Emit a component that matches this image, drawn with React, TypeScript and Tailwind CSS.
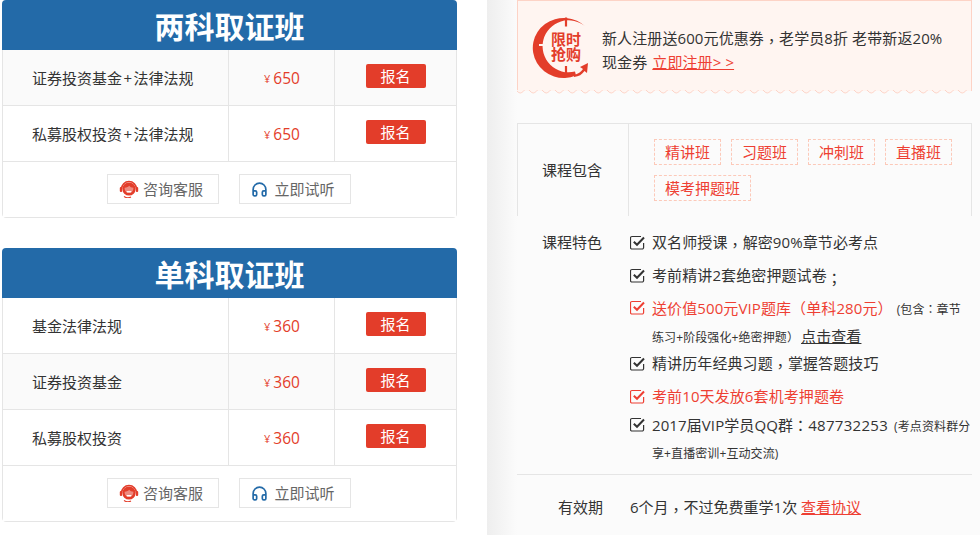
import React from "react";
import { Headphones } from "lucide-react";

const FONT = "font-['Open_Sans','Noto_Sans_CJK_SC',sans-serif]";

const P = ({ c }: { c: string }) => <span className="font-['Noto_Sans_CJK_TC']">{c}</span>;
const Comma = ({ c = "，" }: { c?: string }) => (
  <span className="inline-block translate-y-[3px] font-['Noto_Sans_CJK_TC'] leading-none">{c}</span>
);

function Agent() {
  return (
    <svg width="20" height="18" viewBox="0 0 20 18" className="shrink-0">
      <path d="M2.500 9a7.500 7.500 0 0 1 15 0" fill="none" stroke="#e33d2a" strokeWidth="1.600" />
      <circle cx="10" cy="9" r="6.600" fill="#e33d2a" />
      <path d="M5.600 7.700c2.400-.2 3.800-1 4.600-2 .9 1.200 2.200 1.900 4.200 2 .2 3-1.800 5-4.400 5s-4.600-2-4.400-5z" fill="#fff" opacity="0.4" />
      <rect x="7.500" y="11" width="5" height="1.600" rx="0.800" fill="#fff" />
      <rect x="0.800" y="7" width="2.400" height="5" rx="1" fill="#e33d2a" />
      <rect x="16.800" y="7" width="2.400" height="5" rx="1" fill="#e33d2a" />
      <path d="M5 16.500a7 7 0 0 0 7 .5" fill="none" stroke="#e33d2a" strokeWidth="1.200" />
    </svg>
  );
}

function Row({ name, price, alt }: { name: string; price: string; alt?: boolean }) {
  const parts = name.split("+");
  return (
    <div className={`flex h-[56px] border-b border-[#e5e5e5] ${alt ? "bg-[#fafafa]" : "bg-white"}`}>
      <div className="flex w-[226px] items-center border-r border-[#e5e5e5] pt-[1px] pl-[29px] text-[15px] text-[#333]">
        {parts[0]}
        {parts[1] && <span className="mx-[1.5px]">+</span>}
        {parts[1]}
      </div>
      <div className="flex w-[106px] items-center justify-center border-r border-[#e5e5e5] pt-[3px] pl-[1px] text-[15.5px] text-[#e33d2a]">
        <span className="mr-[3px] text-[11px]">¥</span>
        {price}
      </div>
      <div className="flex flex-1 justify-center pt-[14px]">
        <div className="flex h-[24px] w-[60px] items-center justify-center rounded-[2px] bg-[#e33d2a] text-[15px] text-white">报名</div>
      </div>
    </div>
  );
}

function Card({ title, rows }: { title: string; rows: { n: string; p: string; alt?: boolean }[] }) {
  return (
    <section className="w-[455px] overflow-hidden rounded-[4px]">
      <h2 className="flex h-[50px] items-center justify-center bg-[#236aa8] pt-[3px] text-[30px] font-bold text-white">{title}</h2>
      <div className="rounded-b-[4px] border-x border-b border-[#e5e5e5]">
        {rows.map((r) => (
          <Row key={r.n} name={r.n} price={r.p} alt={r.alt} />
        ))}
        <div className="flex h-[55px] items-center justify-center gap-[20px] bg-white pr-[2px] pb-[1px]">
          <div className="flex h-[30px] w-[112px] items-center justify-center gap-[4px] border border-[#e5e5e5] pr-[3px] text-[15px] text-[#666]">
            <Agent />
            咨询客服
          </div>
          <div className="flex h-[30px] w-[112px] items-center justify-center gap-[6px] border border-[#e5e5e5] pr-[3px] text-[15px] text-[#666]">
            <Headphones size={17} color="#236aa8" strokeWidth={2.4} />
            立即试听
          </div>
        </div>
      </div>
    </section>
  );
}

function Timer() {
  return (
    <div className="relative h-[64px] w-[60px] shrink-0">
      <svg width="60" height="64" viewBox="0 0 60 64" className="absolute inset-0">
        <path d="M54 12A31 30 0 1 0 44 60.500L43 56.500A26 26 0 1 1 54 12Z" fill="#e33d2a" />
        <path d="M34 2.500v9M34 51v10" stroke="#e33d2a" strokeWidth="2.200" />
        <path d="M7 30h4" stroke="#fff5f1" strokeWidth="2" />
        <path d="M42 60c4-1 7-3 9-6l-3-2 8-4-1 10-2.500-2c-2.500 3.500-5.500 5.500-10.500 6z" fill="#e33d2a" />
      </svg>
      <div className="absolute top-[17px] left-[19px] w-[30px] text-center text-[15px] leading-[15px] font-bold text-[#e33d2a]">
        限时
        <br />
        抢购
      </div>
    </div>
  );
}

function Check({ red }: { red?: boolean }) {
  const c = red ? "#ee3f33" : "#333";
  return (
    <svg width="15" height="15" viewBox="0 0 15 15" className="mt-[9px] shrink-0">
      <path d="M13.600 8v4.500a1.500 1.500 0 0 1-1.500 1.500H2a1.500 1.500 0 0 1-1.500-1.500V3a1.500 1.500 0 0 1 1.500-1.500h9" fill="none" stroke={c} strokeWidth="1.200" />
      <path d="M3.800 6.800l3.200 3 7-7.300" fill="none" stroke={c} strokeWidth="2" />
    </svg>
  );
}

function Feature({ red, children, extra, cls }: { red?: boolean; children: React.ReactNode; extra?: React.ReactNode; cls: string }) {
  return (
    <li className={`flex gap-[7px] ${cls}`}>
      <Check red={red} />
      <div className={`w-[320px] text-[15px] leading-[33px] tracking-[0.1px] ${red ? "text-[#ee3f33]" : "text-[#333]"}`}>
        {children}
        {extra}
      </div>
    </li>
  );
}

const Tag = ({ t, w }: { t: string; w: string }) => (
  <span className={`flex h-[26px] items-center justify-center border border-dashed border-[#fcc9b9] text-[15px] text-[#ee3f33] ${w}`}>{t}</span>
);

export default function App() {
  return (
    <div className={`flex h-[535px] w-[980px] overflow-hidden bg-white ${FONT}`}>
      <div className="flex w-[487px] shrink-0 flex-col gap-[30px] pl-[2px]">
        <Card title="两科取证班" rows={[{ n: "证券投资基金+法律法规", p: "650", alt: true }, { n: "私募股权投资+法律法规", p: "650" }]} />
        <Card title="单科取证班" rows={[{ n: "基金法律法规", p: "360" }, { n: "证券投资基金", p: "360", alt: true }, { n: "私募股权投资", p: "360" }]} />
      </div>

      <div className="flex-1 bg-[#fbfbfb] bg-[linear-gradient(to_right,#eeeeee,#fbfbfb_30px)] pr-[8px] pl-[30px]">
        <div className="relative h-[91px] border-x border-t border-[#fdd3c6] bg-[#fff5f1]">
          <div className="flex items-start pt-[14px] pl-[14px]">
            <Timer />
            <p className="ml-[10px] w-[352px] pt-[11px] text-[15px] leading-[24px] tracking-[0.1px] text-[#333]">
              新人注册送600元优惠券<Comma />老学员8折 老带新返20%现金券{" "}
              <a className="ml-[1px] text-[#ee3f33] underline">立即注册&gt; &gt;</a>
            </p>
          </div>
          <svg className="absolute -bottom-[3px] -left-[1px]" width="455" height="4" viewBox="0 0 455 4">
            <defs>
              <pattern id="wave" width="13" height="4" patternUnits="userSpaceOnUse">
                <path d="M0 1Q3.250 5 6.500 1T13 1V0H0Z" fill="#fff5f1" stroke="none" />
                <path d="M0 1Q3.250 5 6.500 1T13 1" fill="none" stroke="#fdd3c6" strokeWidth="1" />
              </pattern>
            </defs>
            <rect width="455" height="4" fill="url(#wave)" />
          </svg>
        </div>

        <div className="mt-[32px] flex h-[93px] border-x border-t border-[#e5e5e5]">
          <div className="flex w-[111px] items-center justify-center border-r border-[#e5e5e5] pr-[2px] text-[15px] text-[#333]">课程包含</div>
          <div className="flex flex-1 flex-wrap content-start gap-x-[10px] gap-y-[10px] pt-[15px] pl-[25px]">
            <Tag t="精讲班" w="w-[67px]" />
            <Tag t="习题班" w="w-[67px]" />
            <Tag t="冲刺班" w="w-[67px]" />
            <Tag t="直播班" w="w-[67px]" />
            <Tag t="模考押题班" w="w-[97px]" />
          </div>
        </div>

        <div className="flex h-[259px] border-b border-[#e5e5e5] pt-[10px]">
          <div className="w-[86px] pl-[25px] text-[15px] leading-[33px] whitespace-nowrap text-[#333]">课程特色</div>
          <ul className="ml-[27px] flex flex-col">
            <Feature cls="h-[33px]">双名师授课<Comma />解密90%章节必考点</Feature>
            <Feature cls="h-[32px]">考前精讲2套绝密押题试卷<Comma c="；" /></Feature>
            <Feature
              red
              cls="h-[56px]"
              extra={
                <span className="text-[#333]">
                  <span className="ml-[4px] text-[12px]">(包含<P c="：" />章节</span>
                  <span className="block leading-[21px]">
                    <span className="text-[12px]">练习+阶段强化+绝密押题<P c="）" /></span>
                    <span className="ml-[2px] text-[15px] underline">点击查看</span>
                  </span>
                </span>
              }
            >
              送价值500元VIP题库<P c="（" />单科280元<P c="）" />
            </Feature>
            <Feature cls="h-[33px]">精讲历年经典习题<Comma />掌握答题技巧</Feature>
            <Feature red cls="h-[28px]">考前10天发放6套机考押题卷</Feature>
            <Feature
              cls="h-[60px]"
              extra={
                <span className="text-[12px]">
                  <span className="ml-[6px]">(考点资料群分</span>
                  <span className="block leading-[21px]">享+直播密训+互动交流)</span>
                </span>
              }
            >
              2017届VIP学员QQ群<P c="：" />
              <span className="tracking-[0.3px]">487732253</span>
            </Feature>
          </ul>
        </div>

        <div className="flex pt-[16px] text-[15px] leading-[33px] text-[#333]">
          <div className="w-[86px] text-right">有效期</div>
          <div className="ml-[27px]">
            6个月<Comma />不过免费重学1次 <a className="text-[#ee3f33] underline">查看协议</a>
          </div>
        </div>
      </div>
    </div>
  );
}
